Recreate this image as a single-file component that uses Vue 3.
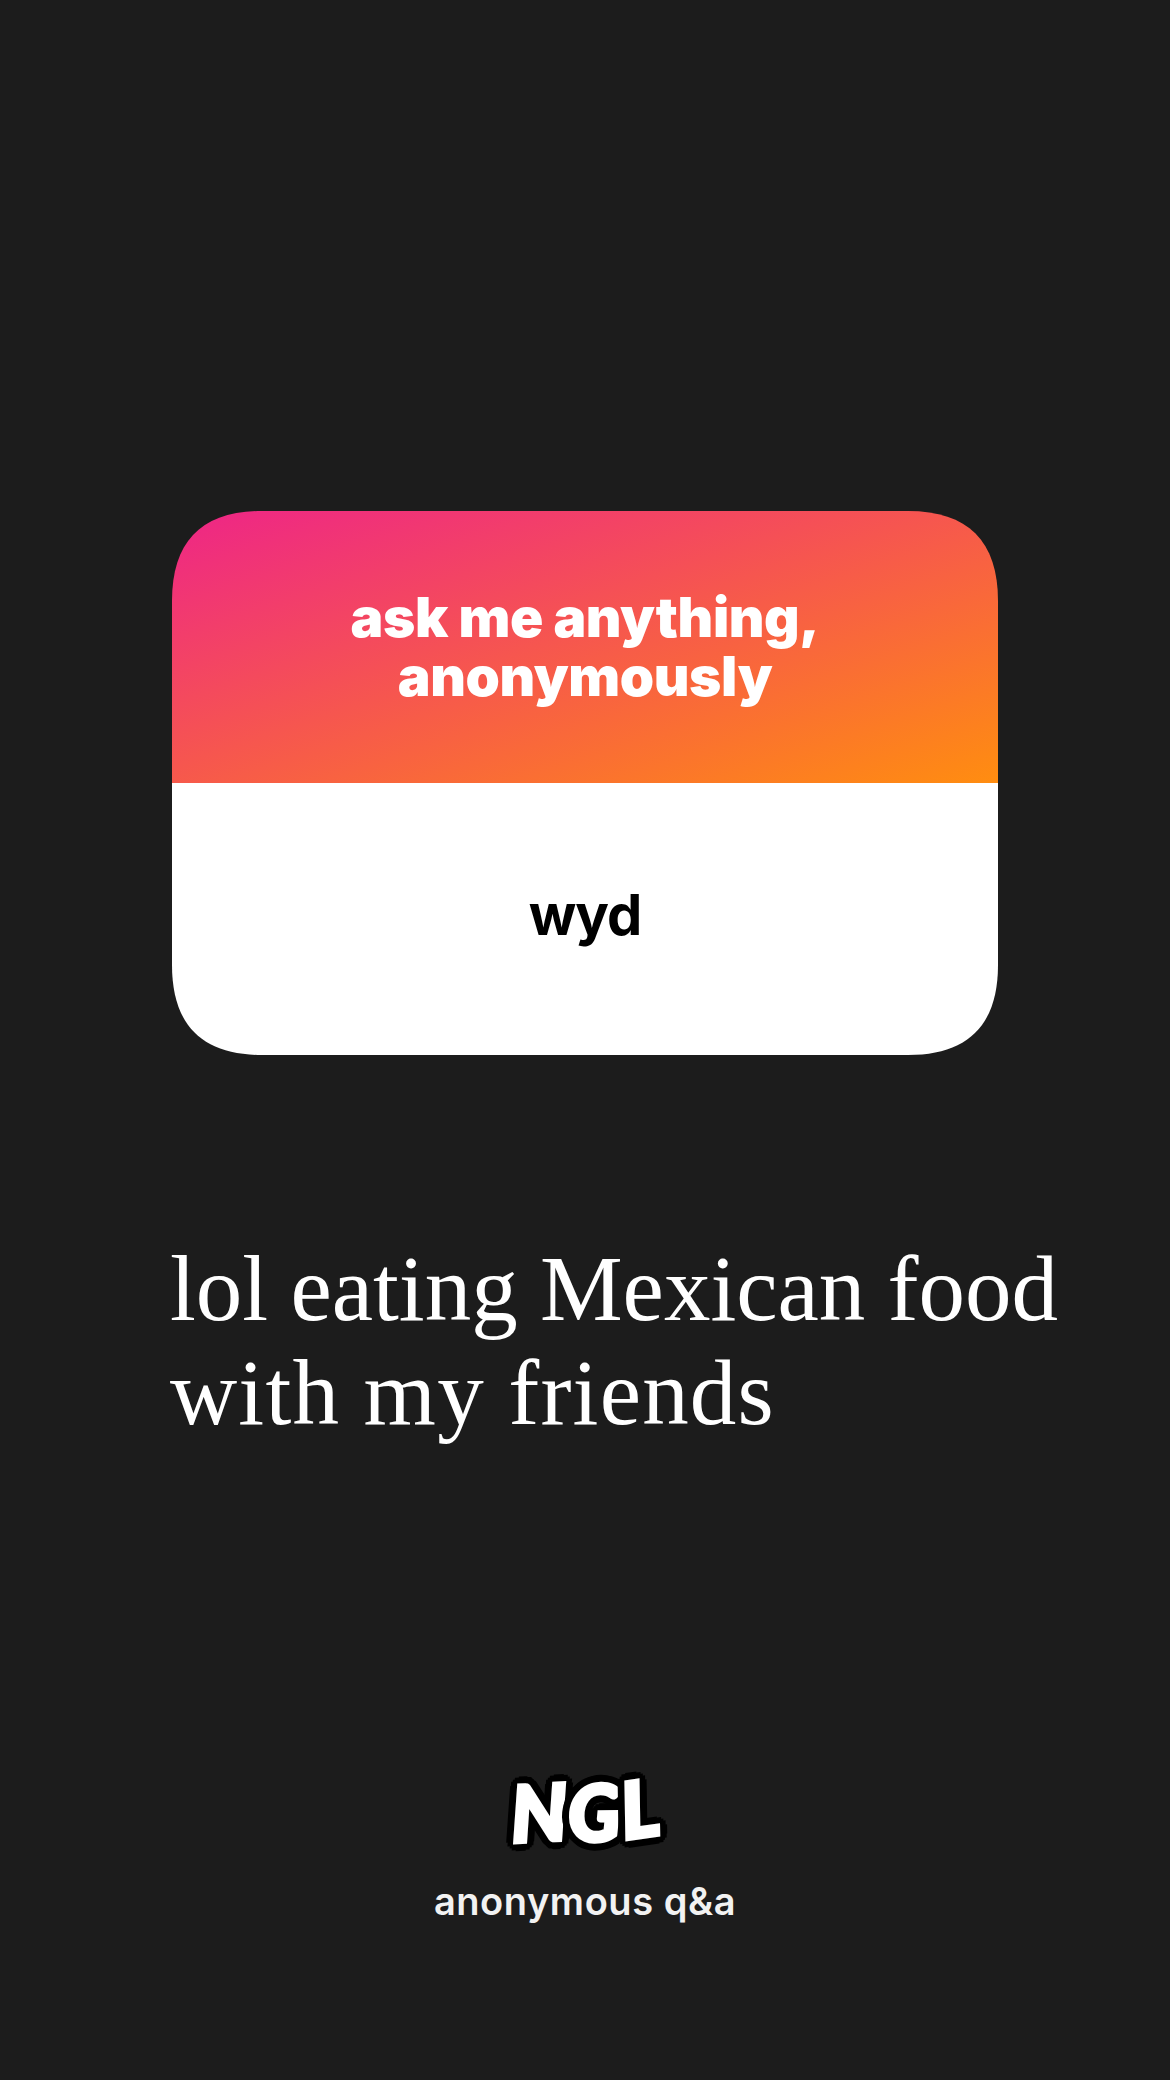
<script setup>
const title = ['ask me anything,', 'anonymously'];
const answer = ['lol eating Mexican food', 'with my friends'];
const letters = ['N', 'G', 'L'];
</script>

<template>
  <main class="story">
    <section class="card">
      <header class="card-top">
        <h1>
          <span v-for="line in title" :key="line">{{ line }}</span>
        </h1>
      </header>
      <div class="card-bottom">wyd</div>
    </section>

    <p class="answer">
      <span v-for="line in answer" :key="line">{{ line }}</span>
    </p>

    <footer class="brand">
      <div class="logo">
        <span v-for="l in letters" :key="l" :class="'letter-' + l">{{ l }}</span>
      </div>
      <div class="tagline">anonymous q&amp;a</div>
    </footer>
  </main>
</template>

<style>
html, body {
  background: #1c1c1c;
}
</style>

<style scoped>
.story {
  width: 1170px;
  height: 2080px;
  box-sizing: border-box;
  padding-top: 511px;
  background: #1c1c1c;
  display: flex;
  flex-direction: column;
  align-items: center;
  overflow: hidden;
}

/* continuous corners, a plain border-radius looks too round here */
.card {
  width: 826px;
  height: 544px;
  clip-path: path('M0 90C0 30 30 0 90 0H736C796 0 826 30 826 90V454C826 514 796 544 736 544H90C30 544 0 514 0 454Z');
  display: flex;
  flex-direction: column;
  flex-shrink: 0;
}

.card-top {
  height: 272px;
  background: linear-gradient(to bottom right, #ee2587, #ff8d10);
  display: flex;
  align-items: center;
  justify-content: center;
}

.card-top h1 {
  margin: 0;
  display: flex;
  flex-direction: column;
  align-items: center;
  font-family: Inter, "Liberation Sans", sans-serif;
  font-size: 55px;
  font-weight: 900;
  line-height: 59px;
  letter-spacing: -0.4px;
  color: #fff;
}

.card-bottom {
  height: 272px;
  box-sizing: border-box;
  padding-bottom: 8px;
  background: #fff;
  display: flex;
  align-items: center;
  justify-content: center;
  font-family: Inter, "Liberation Sans", sans-serif;
  font-size: 56px;
  font-weight: 700;
  letter-spacing: -1px;
  color: #000;
}

.answer {
  align-self: flex-start;
  display: flex;
  flex-direction: column;
  margin: 182px 0 0 170px;
  font-family: "Liberation Serif", serif;
  font-size: 93px;
  line-height: 104px;
  word-spacing: -1px;
  white-space: nowrap;
  color: #fff;
}

.answer span:last-child {
  letter-spacing: 1.2px;
}

.brand {
  margin-top: 321px;
  display: flex;
  flex-direction: column;
  align-items: center;
}

.logo {
  display: flex;
  height: 90px;
  align-items: center;
  font-family: Lato, "Liberation Sans", sans-serif;
  font-size: 78px;
  font-style: italic;
  font-weight: 900;
  line-height: 1;
  color: #fff;
}

.logo span {
  display: block;
  -webkit-text-stroke: 4px #fff;
  text-shadow:
    9px 0 0 #000, -9px 0 0 #000, 0 9px 0 #000, 0 -9px 0 #000,
    6px 6px 0 #000, -6px 6px 0 #000, 6px -6px 0 #000, -6px -6px 0 #000,
    8px 4px 0 #000, -8px 4px 0 #000, 8px -4px 0 #000, -8px -4px 0 #000,
    4px 8px 0 #000, -4px 8px 0 #000, 4px -8px 0 #000, -4px -8px 0 #000;
}

.letter-N {
  transform: rotate(-3deg);
}

.letter-G {
  margin-left: 1px;
  transform: rotate(-1deg);
}

.letter-L {
  margin-left: 0;
  transform: rotate(-8deg) translateY(-4px);
}

.tagline {
  margin-top: 22px;
  font-family: Inter, "Liberation Sans", sans-serif;
  font-size: 38px;
  font-weight: 600;
  letter-spacing: 0.55px;
  color: #f2f2f2;
}
</style>
